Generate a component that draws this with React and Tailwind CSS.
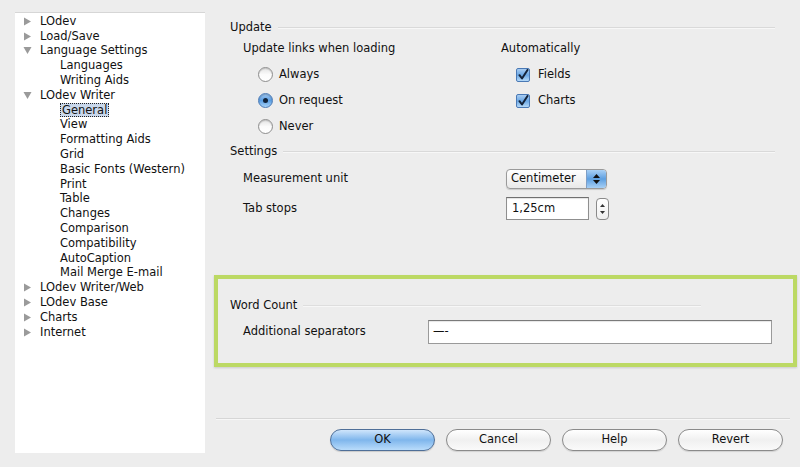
import React from "react";

const font = { fontFamily: '"DejaVu Sans", "Liberation Sans", sans-serif' };

function TriRight() {
  return (
    <svg width="9" height="9" viewBox="0 0 9 9" className="shrink-0">
      <polygon points="1,0.5 8,4.5 1,8.5" fill="#9a9a9a" />
    </svg>
  );
}
function TriDown() {
  return (
    <svg width="9" height="9" viewBox="0 0 9 9" className="shrink-0">
      <polygon points="0.5,1 8.5,1 4.5,8" fill="#9a9a9a" />
    </svg>
  );
}

function TreeRow({ label, level, open, selected }) {
  if (level === 0) {
    return (
      <div className="flex items-center h-[14.8px]">
        <div className="w-[25px] flex justify-end pr-[8px]">{open ? <TriDown /> : <TriRight />}</div>
        <span>{label}</span>
      </div>
    );
  }
  return (
    <div className="flex items-center h-[14.8px] pl-[45px]">
      {selected ? (
        <span className="border border-dotted border-[#222] bg-[#c9d8ec] px-[1px] leading-[12px]">{label}</span>
      ) : (
        <span>{label}</span>
      )}
    </div>
  );
}

function Radio({ checked }) {
  if (checked) {
    return (
      <div className="w-[15px] h-[15px] rounded-full border border-[#4a79b5] bg-gradient-to-b from-[#9fc7f0] via-[#5a9ee3] to-[#a6d2f7] flex items-center justify-center shadow-[inset_0_1px_1px_rgba(0,0,0,0.2)]">
        <div className="w-[5px] h-[5px] rounded-full bg-[#10233a]" />
      </div>
    );
  }
  return (
    <div className="w-[15px] h-[15px] rounded-full border border-[#8e8e8e] bg-gradient-to-b from-[#e3e3e3] via-[#fbfbfb] to-white shadow-[inset_0_1px_1px_rgba(0,0,0,0.15)]" />
  );
}

function Check() {
  return (
    <div className="w-[14px] h-[14px] rounded-[2px] border border-[#4a79b5] bg-gradient-to-b from-[#a9cdf2] via-[#6aa7e4] to-[#b5d9f8] flex items-center justify-center">
      <svg width="12" height="12" viewBox="0 0 12 12">
        <path d="M2.5 6.2 L5 9.5 L10.5 1" stroke="#14233a" strokeWidth="2" fill="none" strokeLinecap="round" strokeLinejoin="round" />
      </svg>
    </div>
  );
}

function GroupHeader({ label, lineRight }) {
  return (
    <div className="flex items-center h-[16px] pl-[14px]">
      <span>{label}</span>
      <div className={`flex-1 h-[2px] ml-[6px] bg-[#d9d9d9] border-b border-[#f7f7f7] ${lineRight}`} />
    </div>
  );
}

function Button({ label, primary }) {
  return (
    <div
      className={
        primary
          ? "w-[105px] h-[22px] rounded-full border border-[#4f6f98] bg-gradient-to-b from-[#cfe5fb] via-[#7fb6ec] to-[#b9dcfb] flex items-center justify-center shadow-[0_1px_1px_rgba(0,0,0,0.15)]"
          : "w-[105px] h-[22px] rounded-full border border-[#8a8a8a] bg-gradient-to-b from-white via-[#f0f0f0] to-[#fafafa] flex items-center justify-center shadow-[0_1px_1px_rgba(0,0,0,0.12)]"
      }
    >
      <span>{label}</span>
    </div>
  );
}

export default function App() {
  const tree = [
    ["LOdev", 0, false],
    ["Load/Save", 0, false],
    ["Language Settings", 0, true],
    ["Languages", 1],
    ["Writing Aids", 1],
    ["LOdev Writer", 0, true],
    ["General", 1, false, true],
    ["View", 1],
    ["Formatting Aids", 1],
    ["Grid", 1],
    ["Basic Fonts (Western)", 1],
    ["Print", 1],
    ["Table", 1],
    ["Changes", 1],
    ["Comparison", 1],
    ["Compatibility", 1],
    ["AutoCaption", 1],
    ["Mail Merge E-mail", 1],
    ["LOdev Writer/Web", 0, false],
    ["LOdev Base", 0, false],
    ["Charts", 0, false],
    ["Internet", 0, false],
  ];

  return (
    <div
      className="w-[800px] h-[467px] overflow-hidden flex bg-[#ededed] text-[11.5px] text-[#111]"
      style={font}
    >
      {/* Left tree */}
      <div className="w-[205px] shrink-0 pl-[15px] pt-[12px]">
        <div className="h-[441px] bg-white border-t border-[#d6d6d6] pt-[1px]">
          {tree.map(([label, level, open, selected]) => (
            <TreeRow key={label} label={label} level={level} open={open} selected={selected} />
          ))}
        </div>
      </div>

      {/* Right content */}
      <div className="flex-1 flex flex-col pl-[11px]">
        <div className="h-[20px]" />
        <GroupHeader label="Update" lineRight="mr-[25px]" />
        <div className="grid grid-cols-[258px_1fr] pl-[27px] mt-[5px]">
          <div className="flex flex-col">
            <div className="h-[16px] flex items-center">Update links when loading</div>
            <div className="flex flex-col pl-[15px] mt-[10px] gap-[11px]">
              <div className="flex items-center h-[15px] gap-[6px]"><Radio /><span>Always</span></div>
              <div className="flex items-center h-[15px] gap-[6px]"><Radio checked /><span>On request</span></div>
              <div className="flex items-center h-[15px] gap-[6px]"><Radio /><span>Never</span></div>
            </div>
          </div>
          <div className="flex flex-col">
            <div className="h-[16px] flex items-center">Automatically</div>
            <div className="flex flex-col pl-[15px] mt-[10px] gap-[11px]">
              <div className="flex items-center h-[15px] gap-[8px]"><Check /><span>Fields</span></div>
              <div className="flex items-center h-[15px] gap-[8px]"><Check /><span>Charts</span></div>
            </div>
          </div>
        </div>

        <div className="mt-[10px]">
          <GroupHeader label="Settings" lineRight="mr-[25px]" />
        </div>
        <div className="grid grid-cols-[263px_1fr] pl-[27px] mt-[9px] items-center">
          <div className="h-[20px] flex items-center">Measurement unit</div>
          <div className="flex">
            <div className="w-[101px] h-[20px] rounded-[4px] border border-[#9a9a9a] bg-gradient-to-b from-white to-[#e9e9e9] flex overflow-hidden shadow-[0_1px_1px_rgba(0,0,0,0.15)]">
              <div className="flex-1 flex items-center pl-[4px]">Centimeter</div>
              <div className="w-[20px] bg-gradient-to-b from-[#a9d0f5] via-[#5d9fe0] to-[#a7d0f5] flex flex-col items-center justify-center gap-[2px] border-l border-[#7f9fc6]">
                <svg width="7" height="4" viewBox="0 0 7 4"><polygon points="3.5,0 7,4 0,4" fill="#111" /></svg>
                <svg width="7" height="4" viewBox="0 0 7 4"><polygon points="0,0 7,0 3.5,4" fill="#111" /></svg>
              </div>
            </div>
          </div>
          <div className="h-[23px] mt-[8px] flex items-center">Tab stops</div>
          <div className="flex items-center mt-[8px] gap-[7px]">
            <div className="w-[83px] h-[23px] bg-white border border-[#8f8f8f] border-t-[#6f6f6f] flex items-center pl-[5px] shadow-[inset_0_1px_1px_rgba(0,0,0,0.12)]">1,25cm</div>
            <div className="w-[13px] h-[22px] rounded-[4px] border border-[#8a8a8a] bg-gradient-to-b from-white to-[#f0f0f0] flex flex-col items-center justify-center gap-[4px]">
              <svg width="5" height="3" viewBox="0 0 5 3"><polygon points="2.5,0 5,3 0,3" fill="#333" /></svg>
              <svg width="5" height="3" viewBox="0 0 5 3"><polygon points="0,0 5,0 2.5,3" fill="#333" /></svg>
            </div>
          </div>
        </div>

        {/* Word Count highlight box */}
        <div className="mt-[55px] ml-[-2px] w-[583px] h-[92px] border-[4px] border-[#bcd964] flex flex-col shadow-[0_1px_2px_rgba(0,0,0,0.15)]">
          <div className="mt-[19px] flex items-center h-[16px] pl-[12px]">
            <span>Word Count</span>
            <div className="flex-1 h-[2px] ml-[6px] mr-[92px] bg-[#dedede] border-b border-[#f7f7f7]" />
          </div>
          <div className="flex items-center mt-[6px] pl-[25px]">
            <div className="w-[185px]">Additional separators</div>
            <div className="w-[344px] h-[24px] bg-white border border-[#9a9a9a] border-t-[#7a7a7a] flex items-center pl-[4px] shadow-[inset_0_1px_1px_rgba(0,0,0,0.1)]">—-</div>
          </div>
        </div>

        <div className="mt-[51px] h-[2px] bg-[#d6d6d6] border-b border-[#f7f7f7] mr-[10px]" />
        <div className="flex gap-[11px] pl-[114px] mt-[9px]">
          <Button label="OK" primary />
          <Button label="Cancel" />
          <Button label="Help" />
          <Button label="Revert" />
        </div>
      </div>
    </div>
  );
}
